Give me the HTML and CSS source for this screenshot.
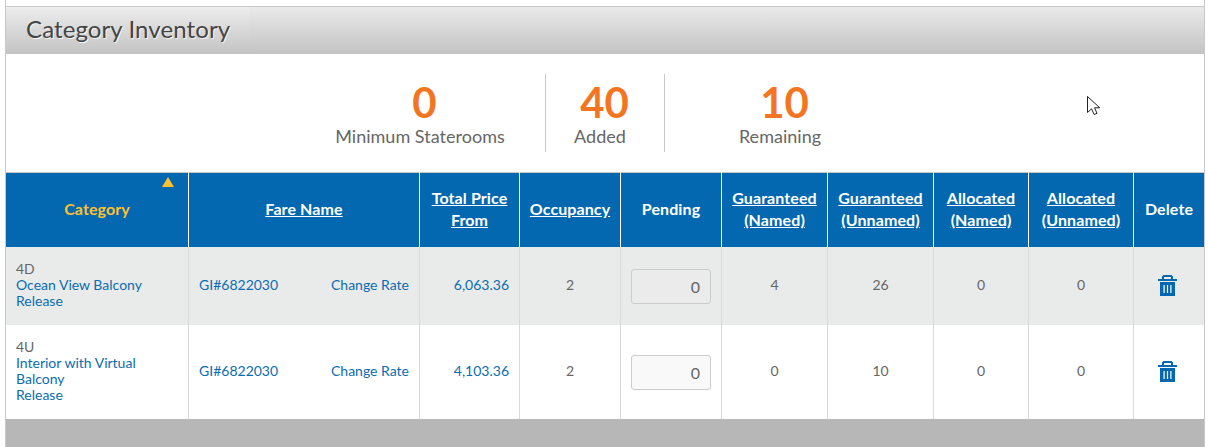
FILE: index.html
```html
<!DOCTYPE html>
<html>
<head>
    <title>Category Inventory</title>
    <link rel="stylesheet" href="styles.css">
</head>
<body>
    <div class="panel">
        <div class="panel-header">
            <h2 class="panel-title">Category Inventory</h2>
        </div>

        <div class="stats">
            <div class="stat stat-min">
                <div class="stat-number">0</div>
                <div class="stat-label">Minimum Staterooms</div>
            </div>
            <div class="stat stat-added">
                <div class="stat-number">40</div>
                <div class="stat-label">Added</div>
            </div>
            <div class="stat stat-remaining">
                <div class="stat-number">10</div>
                <div class="stat-label">Remaining</div>
            </div>
        </div>

        <table class="inventory">
            <colgroup>
                <col class="col-category">
                <col class="col-fare">
                <col class="col-price">
                <col class="col-occupancy">
                <col class="col-pending">
                <col class="col-guaranteed">
                <col class="col-guaranteed">
                <col class="col-alloc-named">
                <col class="col-alloc-unnamed">
                <col class="col-delete">
            </colgroup>
            <thead>
                <tr>
                    <th class="sorted">Category<span class="sort-arrow"></span></th>
                    <th><a href="#">Fare Name</a></th>
                    <th><a href="#">Total Price From</a></th>
                    <th><a href="#">Occupancy</a></th>
                    <th>Pending</th>
                    <th><a href="#">Guaranteed (Named)</a></th>
                    <th><a href="#">Guaranteed (Unnamed)</a></th>
                    <th><a href="#">Allocated (Named)</a></th>
                    <th><a href="#">Allocated (Unnamed)</a></th>
                    <th>Delete</th>
                </tr>
            </thead>
            <tbody>
                <tr class="row-first">
                    <td class="category">4D<br><a href="#">Ocean View Balcony</a><br><a href="#">Release</a></td>
                    <td><div class="fare"><a href="#">GI#6822030</a><a href="#">Change Rate</a></div></td>
                    <td class="price"><a href="#">6,063.36</a></td>
                    <td>2</td>
                    <td><input class="pending-input" type="text" value="0"></td>
                    <td>4</td>
                    <td>26</td>
                    <td>0</td>
                    <td>0</td>
                    <td>
                        <svg class="trash" width="19" height="21" viewBox="0 0 19 21">
                            <path fill="#0368b0" d="M4 4V1.5L5.5 0h8L15 1.500V4h4v2H0V4zM6 4h7V2H6zM2 7h15v14H2z"/>
                            <path fill="#fff" d="M5.500 10h1.200v8H5.500zM8.900 10h1.200v8H8.900zM12.300 10h1.200v8h-1.200z"/>
                        </svg>
                    </td>
                </tr>
                <tr class="row-second">
                    <td class="category">4U<br><a href="#">Interior with Virtual Balcony</a><br><a href="#">Release</a></td>
                    <td><div class="fare"><a href="#">GI#6822030</a><a href="#">Change Rate</a></div></td>
                    <td class="price"><a href="#">4,103.36</a></td>
                    <td>2</td>
                    <td><input class="pending-input" type="text" value="0"></td>
                    <td>0</td>
                    <td>10</td>
                    <td>0</td>
                    <td>0</td>
                    <td>
                        <svg class="trash" width="19" height="21" viewBox="0 0 19 21">
                            <path fill="#0368b0" d="M4 4V1.5L5.5 0h8L15 1.500V4h4v2H0V4zM6 4h7V2H6zM2 7h15v14H2z"/>
                            <path fill="#fff" d="M5.500 10h1.200v8H5.500zM8.900 10h1.200v8H8.900zM12.300 10h1.200v8h-1.200z"/>
                        </svg>
                    </td>
                </tr>
            </tbody>
        </table>

        <div class="panel-footer"></div>

        <svg class="cursor" width="14" height="20" viewBox="0 0 14 20">
            <path fill="#fff" stroke="#222" stroke-width="1" d="M0.500 0.500V16.500L4.500 12.800L7.200 18.500L10 17.300L7.500 11.800H12.800z"/>
        </svg>
    </div>
</body>
</html>
```

FILE: styles.css
```css
html, body {
    height: 447px;
    overflow: hidden;
}
body {
    margin: 0;
    background: #fff;
    font-family: Lato, "Open Sans", sans-serif;
    color: #666;
}
.panel {
    position: relative;
    width: 1198px;
    margin-left: 5px;
    padding-top: 6px;
    border-left: 1px solid #c8c8c8;
    border-right: 1px solid #c8c8c8;
}
.panel-header {
    height: 47px;
    border-top: 1px solid #c8c8c8;
    background: linear-gradient(#eaeaea, #c3c3c3);
}
.panel-title {
    width: 224px;
    height: 46px;
    margin: 0;
    padding-left: 20px;
    border-top: 1px solid #efefef;
    border-top-right-radius: 4px;
    background: linear-gradient(#ececec, #c3c3c3);
    color: #444;
    font-size: 24px;
    font-weight: 400;
    letter-spacing: 0.1px;
    line-height: 41px;
    text-shadow: 1px 1px 0 #f4f4f4;
}
.stats {
    display: flex;
    height: 78px;
    padding: 20px 0 20px 289px;
}
.stat {
    text-align: center;
    border-right: 1px solid #c8c8c8;
}
.stat-min {
    width: 250px;
}
.stat-added {
    width: 108px;
    padding-right: 10px;
}
.stat-remaining {
    width: 230px;
    border-right: none;
}
.stat-number {
    height: 51px;
    padding-left: 9px;
    color: #f47521;
    font-size: 42px;
    font-weight: 700;
    line-height: 56px;
}
.stat-label {
    font-size: 18px;
    letter-spacing: 0.02px;
    line-height: 22px;
}
.inventory {
    width: 1198px;
    border-collapse: separate;
    border-spacing: 0;
    table-layout: fixed;
    font-size: 14px;
}
.col-category { width: 183px; }
.col-fare { width: 231px; }
.col-price { width: 100px; }
.col-occupancy { width: 101px; }
.col-pending { width: 101px; }
.col-guaranteed { width: 106px; }
.col-alloc-named { width: 95px; }
.col-alloc-unnamed { width: 105px; }
.col-delete { width: 70px; }
.inventory th {
    position: relative;
    box-sizing: border-box;
    height: 75px;
    padding: 0 4px 2px;
    border-top: 1px solid #c8c8c8;
    border-right: 1px solid #fff;
    background: #0368b0;
    color: #fff;
    font-size: 16px;
    font-weight: 700;
    letter-spacing: 0.1px;
    line-height: 22px;
}
.inventory th:last-child,
.inventory td:last-child {
    border-right: none;
}
.inventory th a {
    color: #fff;
}
.inventory th.sorted {
    color: #fdc02f;
}
.sort-arrow {
    position: absolute;
    top: 4px;
    right: 14px;
    border-left: 6px solid transparent;
    border-right: 6px solid transparent;
    border-bottom: 10px solid #fdc02f;
}
.inventory td {
    box-sizing: border-box;
    padding: 0 10px 2px;
    border-right: 1px solid #d9d9d9;
    line-height: 16px;
    text-align: center;
    vertical-align: middle;
}
.row-first td {
    height: 78px;
    background: #e9ebeb;
}
.row-second td {
    height: 94px;
    background: #fff;
}
.inventory td.category {
    text-align: left;
}
.inventory td.price {
    text-align: right;
}
.inventory td a {
    color: #0c6cb0;
    text-decoration: none;
}
.fare {
    display: flex;
    justify-content: space-between;
}
.pending-input {
    display: block;
    box-sizing: border-box;
    width: 80px;
    height: 35px;
    margin-top: 2px;
    padding: 0 10px;
    border: 1px solid #ccc;
    border-radius: 3px;
    background: #f9f9f9;
    color: #666;
    font-family: Lato, "Open Sans", sans-serif;
    font-size: 16px;
    text-align: right;
}
.row-first .pending-input {
    background: #ebebeb;
}
.trash {
    display: block;
    margin-left: 14px;
}
.panel-footer {
    height: 28px;
    background: #b7b7b7;
}
.cursor {
    position: absolute;
    top: 96px;
    left: 1081px;
}
```
